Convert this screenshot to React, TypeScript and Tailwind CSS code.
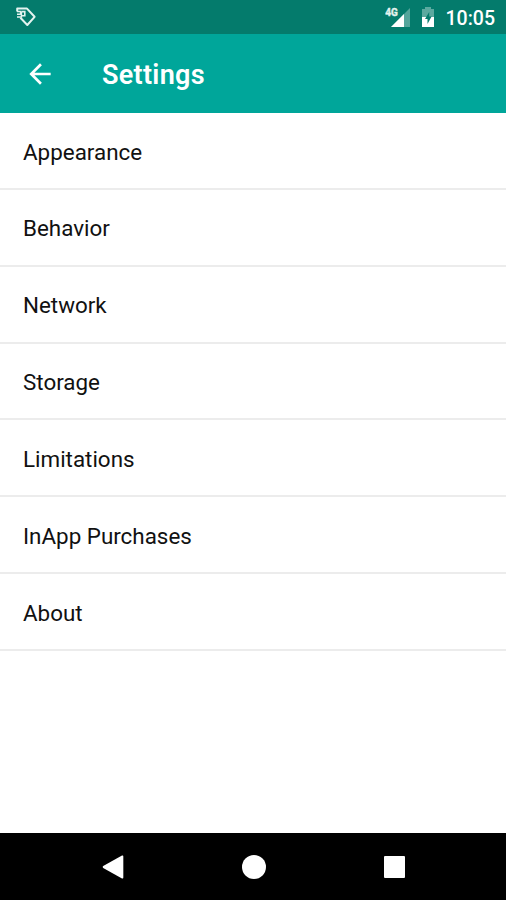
const items = [
  "Appearance",
  "Behavior",
  "Network",
  "Storage",
  "Limitations",
  "InApp Purchases",
  "About",
];

function TagIcon() {
  return (
    <svg width="22" height="22" viewBox="0 0 22 22" fill="none" stroke="#e4f3ef">
      <path d="M2.2 5.4V2.6H12L19.6 10.8L12.3 19L5.4 11.8" strokeWidth="2" strokeLinejoin="round" />
      <path d="M2 5.6H5.6V8.2M2 8.2H5.6M2 11H6.4V5.6" strokeWidth="1.5" />
      <path d="M6.6 5.6H9.8V9.8H6.6" strokeWidth="1.6" />
    </svg>
  );
}

function SignalIcon() {
  return (
    <svg width="26" height="22" viewBox="0 0 26 22">
      <path d="M25 2V21H6Z" fill="#fff" opacity="0.32" />
      <path d="M19 8V21H6Z" fill="#fff" />
      <text
        x="0.3"
        y="10"
        fontSize="10.5"
        fontWeight="700"
        fill="#e4f3ef"
        stroke="#e4f3ef"
        strokeWidth="0.4"
        textLength="12.5"
        lengthAdjust="spacingAndGlyphs"
      >
        4G
      </text>
    </svg>
  );
}

function BatteryIcon() {
  return (
    <svg width="14" height="22" viewBox="0 0 14 22">
      <path d="M4 1H10V3H13V11H1V3H4Z" fill="#fff" opacity="0.35" />
      <path d="M1 11H13V21H1Z" fill="#fff" />
      <path d="M8.2 6L4 13H6.5V18L10.6 10.5H8.2Z" fill="#047b6c" />
    </svg>
  );
}

export default function App() {
  return (
    <div className="flex h-screen flex-col bg-white font-['Roboto',sans-serif]">
      {/* Status bar */}
      <div className="flex h-[34px] shrink-0 items-center bg-[#047b6c] pl-[15px] pr-[11px] text-white">
        <TagIcon />
        <div className="ml-auto flex items-center">
          <SignalIcon />
          <span className="ml-[10px]">
            <BatteryIcon />
          </span>
          <span className="ml-[11px] mt-[3px] text-[19.5px] font-medium leading-6">10:05</span>
        </div>
      </div>

      {/* App bar */}
      <header className="flex h-[79px] shrink-0 items-center bg-[#00a69a] pl-[24px] text-white">
        <svg width="32" height="32" viewBox="0 0 24 24" fill="currentColor">
          <path d="M20 11H7.83l5.59-5.59L12 4l-8 8 8 8 1.41-1.41L7.83 13H20v-2z" />
        </svg>
        <h1 className="ml-[46px] mt-[3px] text-[27px] font-semibold tracking-[0.3px] leading-8">Settings</h1>
      </header>

      <ul>
        {items.map((item) => (
          <li
            key={item}
            className="flex h-[76.85px] items-center border-b-2 border-[#ececec] pl-[23px] pt-[4px] text-[22.4px] text-[#111]"
          >
            {item}
          </li>
        ))}
      </ul>

      {/* Navigation bar */}
      <nav className="mt-auto flex h-[67px] shrink-0 items-center justify-between bg-black pl-[102px] pr-[101px]">
        <svg width="22" height="24" viewBox="0 0 22 24" fill="#fff">
          <path d="M20 0.6Q21.3 0 21.3 1.4V22.6Q21.3 24 20 23.4L1.2 13Q0 12 1.2 11Z" />
        </svg>
        <div className="size-6 rounded-full bg-white" />
        <div className="h-[22px] w-[21px] rounded-[1px] bg-white" />
      </nav>
    </div>
  );
}
